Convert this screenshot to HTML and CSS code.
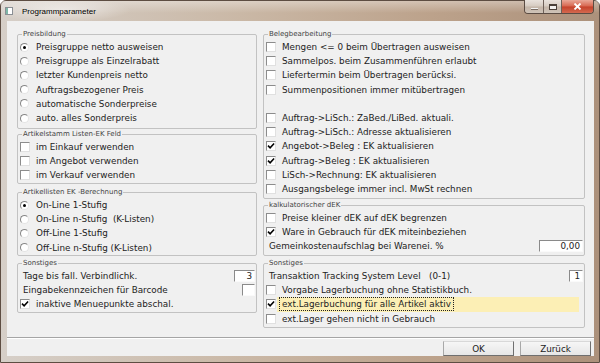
FILE: index.html
```html
<!DOCTYPE html>
<html lang="de">
<head>
    <meta charset="UTF-8">
    <title>Programmparameter</title>
    <link rel="stylesheet" href="styles.css">
</head>
<body>

<div class="window">
    <div class="titlebar">
        <svg class="app-icon" width="8" height="8" viewBox="0 0 8 8">
            <rect x="0.5" y="0.5" width="7" height="7" fill="#fff" stroke="#8a8f94"/>
            <rect x="1" y="1" width="2" height="6" fill="#7fb7a8"/>
        </svg>
        <span class="title">Programmparameter</span>
        <div class="caption">
            <span class="cap cap-min"><span class="min-bar"></span></span>
            <span class="cap cap-max"><span class="max-box"></span></span>
            <span class="cap cap-close">
                <svg width="9" height="7" viewBox="0 0 9 7"><path d="M1.5 0.5l6 6M7.5 0.5l-6 6" stroke="#fff" stroke-width="1.8"/></svg>
            </span>
        </div>
    </div>

    <div class="client">
        <div class="columns">
            <!-- linke Spalte -->
            <div class="col">
                <fieldset class="group g-preis">
                    <legend>Preisbildung</legend>
                    <div class="row"><span class="mark"><span class="radio on"></span></span>Preisgruppe netto ausweisen</div>
                    <div class="row"><span class="mark"><span class="radio"></span></span>Preisgruppe als Einzelrabatt</div>
                    <div class="row"><span class="mark"><span class="radio"></span></span>letzter Kundenpreis netto</div>
                    <div class="row"><span class="mark"><span class="radio"></span></span>Auftragsbezogener Preis</div>
                    <div class="row"><span class="mark"><span class="radio"></span></span>automatische Sonderpreise</div>
                    <div class="row"><span class="mark"><span class="radio"></span></span>auto. alles Sonderpreis</div>
                </fieldset>

                <fieldset class="group g-stamm">
                    <legend>Artikelstamm Listen-EK Feld</legend>
                    <div class="row"><span class="mark"><span class="box"></span></span>im Einkauf verwenden</div>
                    <div class="row"><span class="mark"><span class="box"></span></span>im Angebot verwenden</div>
                    <div class="row"><span class="mark"><span class="box"></span></span>im Verkauf verwenden</div>
                </fieldset>

                <fieldset class="group g-listen">
                    <legend>Artikellisten EK -Berechnung</legend>
                    <div class="row"><span class="mark"><span class="radio on"></span></span>On-Line 1-Stufig</div>
                    <div class="row"><span class="mark"><span class="radio"></span></span>On-Line n-Stufig  (K-Listen)</div>
                    <div class="row"><span class="mark"><span class="radio"></span></span>Off-Line 1-Stufig</div>
                    <div class="row"><span class="mark"><span class="radio"></span></span>Off-Line n-Stufig (K-Listen)</div>
                </fieldset>

                <fieldset class="group g-sonst-l">
                    <legend>Sonstiges</legend>
                    <div class="row field"><span class="label">Tage bis fall. Verbindlichk.</span><span class="num w-tage">3</span></div>
                    <div class="row field"><span class="label">Eingabekennzeichen für Barcode</span><span class="num w-barcode"></span></div>
                    <div class="row"><span class="mark"><span class="box"><svg class="tick" viewBox="0 0 8 8"><path d="M1 3.6l2.1 2.2 4-4.3"/></svg></span></span>inaktive Menuepunkte abschal.</div>
                </fieldset>
            </div>

            <!-- rechte Spalte -->
            <div class="col">
                <fieldset class="group g-beleg">
                    <legend>Belegbearbeitung</legend>
                    <div class="row"><span class="mark"><span class="box"></span></span>Mengen &lt;= 0 beim Übertragen ausweisen</div>
                    <div class="row"><span class="mark"><span class="box"></span></span>Sammelpos. beim Zusammenführen erlaubt</div>
                    <div class="row"><span class="mark"><span class="box"></span></span>Liefertermin beim Übertragen berücksi.</div>
                    <div class="row"><span class="mark"><span class="box"></span></span>Summenpositionen immer mitübertragen</div>
                    <div class="row"></div>
                    <div class="row"><span class="mark"><span class="box"></span></span>Auftrag-&gt;LiSch.: ZaBed./LiBed. aktuali.</div>
                    <div class="row"><span class="mark"><span class="box"></span></span>Auftrag-&gt;LiSch.: Adresse aktualisieren</div>
                    <div class="row"><span class="mark"><span class="box"><svg class="tick" viewBox="0 0 8 8"><path d="M1 3.6l2.1 2.2 4-4.3"/></svg></span></span>Angebot-&gt;Beleg : EK aktualisieren</div>
                    <div class="row"><span class="mark"><span class="box"><svg class="tick" viewBox="0 0 8 8"><path d="M1 3.6l2.1 2.2 4-4.3"/></svg></span></span>Auftrag-&gt;Beleg : EK aktualisieren</div>
                    <div class="row"><span class="mark"><span class="box"></span></span>LiSch-&gt;Rechnung: EK aktualisieren</div>
                    <div class="row"><span class="mark"><span class="box"></span></span>Ausgangsbelege immer incl. MwSt rechnen</div>
                </fieldset>

                <fieldset class="group g-kalk">
                    <legend>kalkulatorischer dEK</legend>
                    <div class="row"><span class="mark"><span class="box"></span></span>Preise kleiner dEK auf dEK begrenzen</div>
                    <div class="row"><span class="mark"><span class="box"><svg class="tick" viewBox="0 0 8 8"><path d="M1 3.6l2.1 2.2 4-4.3"/></svg></span></span>Ware in Gebrauch für dEK miteinbeziehen</div>
                    <div class="row field"><span class="label">Gemeinkostenaufschlag bei Warenei. %</span><span class="num w-proz">0,00</span></div>
                </fieldset>

                <fieldset class="group g-sonst-r">
                    <legend>Sonstiges</legend>
                    <div class="row field"><span class="label">Transaktion Tracking System Level   (0-1)</span><span class="num w-level">1</span></div>
                    <div class="row"><span class="mark"><span class="box"></span></span>Vorgabe Lagerbuchung ohne Statistikbuch.</div>
                    <div class="row"><span class="mark tight"><span class="box"><svg class="tick" viewBox="0 0 8 8"><path d="M1 3.6l2.1 2.2 4-4.3"/></svg></span></span><span class="hl"><span class="focus">ext.Lagerbuchung für alle Artikel aktiv</span></span></div>
                    <div class="row"><span class="mark"><span class="box"></span></span>ext.Lager gehen nicht in Gebrauch</div>
                </fieldset>
            </div>
        </div>

        <div class="footer">
            <button type="button" class="btn">OK</button>
            <button type="button" class="btn">Zurück</button>
        </div>
    </div>
</div>

</body>
</html>
```

FILE: styles.css
```css
* {
  box-sizing: border-box;
}

html, body {
  margin: 0;
  padding: 0;
}

body {
  width: 600px;
  height: 363px;
  overflow: hidden;
  font-family: "DejaVu Sans", sans-serif;
  font-size: 8.8px;
  color: #222;
  background: #fff;
}

.window {
  width: 600px;
  height: 363px;
  display: flex;
  flex-direction: column;
  border: 1px solid #5d4d42;
  border-radius: 6px 6px 0 0;
  background: linear-gradient(to right, #d6cfc8 0%, #cab8a6 40%, #bca28b 72%, #ac917b 100%);
}

/* Titelleiste */
.titlebar {
  height: 20px;
  flex: none;
  display: flex;
  align-items: center;
  padding-left: 4px;
  background:
    radial-gradient(ellipse 70px 12px at 60px 9px, rgba(255, 255, 255, 0.55), rgba(255, 255, 255, 0)),
    linear-gradient(to bottom, rgba(255, 255, 255, 0.35), rgba(255, 255, 255, 0) 60%);
}

.app-icon {
  flex: none;
}

.title {
  margin-left: 9px;
  font-family: "Liberation Sans", sans-serif;
  font-size: 8px;
  color: #000;
}

.caption {
  margin-left: auto;
  margin-right: 5px;
  margin-top: -1px;
  align-self: flex-start;
  display: flex;
  height: 14px;
  border: 1px solid #5b4c43;
  border-top: none;
  border-radius: 0 0 4px 4px;
  overflow: hidden;
}

.cap {
  display: flex;
  align-items: center;
  justify-content: center;
  height: 100%;
}

.cap-min,
.cap-max {
  width: 19px;
  border-right: 1px solid #6e6058;
  background: linear-gradient(to bottom, #e9e2dc 0%, #d6cbc1 48%, #c4b5a8 52%, #cfc3b8 100%);
}

.cap-max {
  width: 18px;
}

.min-bar {
  width: 7px;
  height: 2px;
  margin-top: 4px;
  background: #f4f4f4;
  border: 1px solid #7a6d64;
  border-width: 0 0 1px 0;
}

.max-box {
  width: 8px;
  height: 6px;
  border: 1px solid #4a4039;
  border-top-width: 2px;
  background: #f2f0ee;
}

.cap-close {
  width: 31px;
  background: linear-gradient(to bottom, #e9a897 0%, #d7664f 48%, #c5412a 52%, #d36a50 100%);
}

/* Arbeitsbereich */
.client {
  flex: 1;
  margin: 0 5px 6px 6px;
  background: #f0f0f0;
  display: flex;
  flex-direction: column;
}

.columns {
  display: grid;
  grid-template-columns: 240px 322px;
  column-gap: 6px;
  align-items: start;
  padding: 9px 9px 0 10px;
}

.col {
  display: flex;
  flex-direction: column;
}

.group {
  margin: 0;
  padding: 2px 1px 0 2px;
  min-width: 0;
  border: 1px solid #c2c2c2;
  border-radius: 2px;
}

.group legend {
  font-size: 7px;
  line-height: 8px;
  padding: 0 1px;
  margin-left: 2px;
  color: #444;
}

.g-preis   { height: 99px; }
.g-stamm   { height: 54px; margin-top: 1px; }
.g-listen  { height: 68px; margin-top: 4px; }
.g-sonst-l { height: 54px; margin-top: 3px; }

.g-beleg   { height: 169px; }
.g-kalk    { height: 55px; margin-top: 2px; }
.g-sonst-r { height: 69px; margin-top: 3px; }

.row {
  display: flex;
  align-items: center;
  height: 14.2px;
  white-space: pre;
}

.row.field {
  padding-left: 3px;
  justify-content: space-between;
}

.mark {
  width: 16px;
  flex: none;
  display: flex;
  align-items: center;
}

.mark.tight {
  width: 11px;
}

.box {
  width: 10px;
  height: 10px;
  display: flex;
  align-items: center;
  justify-content: center;
  background: #fff;
  border: 1px solid;
  border-color: #8c8c8c #e0e0e0 #e0e0e0 #8c8c8c;
}

.tick {
  width: 8px;
  height: 8px;
}

.tick path {
  fill: none;
  stroke: #000;
  stroke-width: 1.6;
}

.radio {
  position: relative;
  width: 9px;
  height: 9px;
  border-radius: 50%;
  background: #fff;
  border: 1px solid;
  border-color: #868686 #e4e4e4 #e4e4e4 #868686;
}

.radio.on::after {
  content: '';
  position: absolute;
  left: 2px;
  top: 2px;
  width: 3px;
  height: 3px;
  border-radius: 50%;
  background: #000;
}

.num {
  height: 12px;
  line-height: 10px;
  padding-right: 2px;
  text-align: right;
  background: #fff;
  border: 1px solid;
  border-color: #8a8a8a #fafafa #fafafa #8a8a8a;
}

.w-tage    { width: 21px; }
.w-barcode { width: 13px; }
.w-proz    { width: 44px; }
.w-level   { width: 14px; }

.hl {
  flex: 1;
  align-self: stretch;
  display: flex;
  align-items: center;
  margin-right: 4px;
  padding-left: 2px;
  background: #fcefb5;
}

.focus {
  line-height: 12px;
  padding: 0 2px;
  border: 1px dotted #222;
}

/* Buttonleiste */
.footer {
  margin-top: auto;
  display: flex;
  justify-content: flex-end;
  gap: 6px;
  padding: 3px 3px 0 0;
  border-top: 1px solid #a5a5a5;
  box-shadow: inset 0 1px #fff;
}

.btn {
  width: 71px;
  height: 15px;
  padding: 0;
  font-family: "DejaVu Sans", sans-serif;
  font-size: 8.8px;
  color: #222;
  background: linear-gradient(to bottom, #f6f6f6, #e6e6e6);
  border: 1px solid;
  border-color: #d8d8d8 #6f6f6f #6f6f6f #a8a8a8;
}
```
